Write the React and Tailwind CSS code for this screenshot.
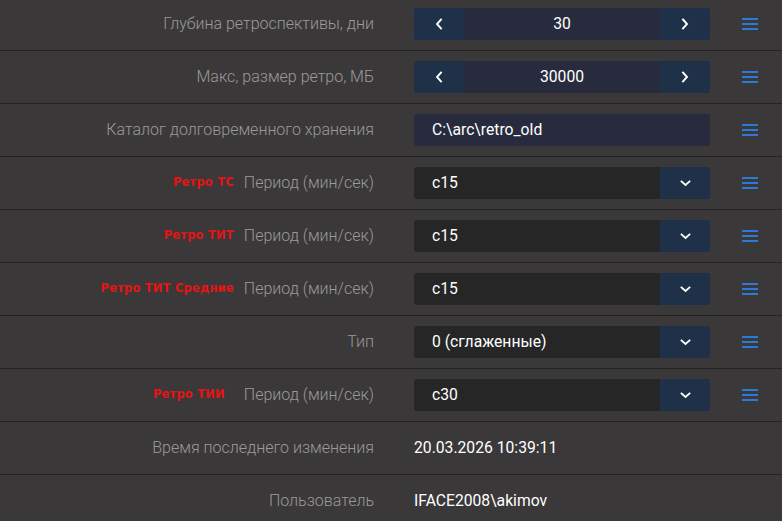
import React from "react";

const Chevron = ({ dir }) => {
  if (dir === "down")
    return (
      <svg viewBox="0 0 11 7" className="w-[11px] h-[7px]" fill="none" stroke="white" strokeWidth="1.8" strokeLinecap="square">
        <path d="M1.5 1.5 L5.5 5 L9.5 1.5" />
      </svg>
    );
  const d = dir === "left" ? "M6 1.5 L2 6 L6 10.5" : "M2 1.5 L6 6 L2 10.5";
  return (
    <svg viewBox="0 0 8 12" className="w-[8px] h-[12px]" fill="none" stroke="white" strokeWidth="1.9" strokeLinecap="square">
      <path d={d} />
    </svg>
  );
};

const Menu = () => (
  <div className="w-[16px] flex flex-col gap-[2.7px]">
    <div className="h-[2px] bg-[#2b7ad6]" />
    <div className="h-[2px] bg-[#2b7ad6]" />
    <div className="h-[2px] bg-[#2b7ad6]" />
  </div>
);

const Stepper = ({ value }) => (
  <div className="w-[296px] h-[32px] flex rounded-[3px] overflow-hidden">
    <div className="w-[50px] bg-[#1e3149] flex items-center justify-center"><Chevron dir="left" /></div>
    <div className="flex-1 bg-[#282b3e] flex items-center justify-center text-white text-[15.7px]">{value}</div>
    <div className="w-[50px] bg-[#1e3149] flex items-center justify-center"><Chevron dir="right" /></div>
  </div>
);

const Select = ({ value }) => (
  <div className="w-[296px] h-[32px] flex rounded-[3px] overflow-hidden">
    <div className="flex-1 bg-[#262626] flex items-center pl-[18px] text-white text-[15.7px]">{value}</div>
    <div className="w-[50px] bg-[#1e3149] flex items-center justify-center"><Chevron dir="down" /></div>
  </div>
);

const Input = ({ value }) => (
  <div className="w-[296px] h-[32px] rounded-[3px] bg-[#282b3e] flex items-center pl-[18px] text-white text-[15.7px]">{value}</div>
);

const Red = ({ children, mr = "mr-[10px]" }) => (
  <span className={`text-[#e51414] font-bold text-[11.5px] tracking-[0.2px] ${mr}`} style={{ fontFamily: '"DejaVu Sans", Verdana, sans-serif' }}>{children}</span>
);

const Row = ({ label, red, redMr, children, menu = true }) => (
  <div className="h-[53px] border-b border-[#242424] flex items-center">
    <div className="w-[374px] flex items-center justify-end text-[#9a9a9a] text-[16px] font-light">
      {red && <Red mr={redMr}>{red}</Red>}
      <span>{label}</span>
    </div>
    <div className="ml-[40px] w-[296px] flex items-center">{children}</div>
    {menu && <div className="ml-[32px]"><Menu /></div>}
  </div>
);

export default function App() {
  return (
    <div className="w-[782px] h-[521px] overflow-hidden bg-[#3a3839]" style={{ fontFamily: "Roboto, sans-serif" }}>
      <div className="-mt-[2px]">
        <Row label="Глубина ретроспективы, дни"><Stepper value="30" /></Row>
        <Row label="Макс, размер ретро, МБ"><Stepper value="30000" /></Row>
        <Row label="Каталог долговременного хранения"><Input value="C:\arc\retro_old" /></Row>
        <Row label="Период (мин/сек)" red="Ретро ТС"><Select value="c15" /></Row>
        <Row label="Период (мин/сек)" red="Ретро ТИТ"><Select value="c15" /></Row>
        <Row label="Период (мин/сек)" red="Ретро ТИТ Средние"><Select value="c15" /></Row>
        <Row label="Тип"><Select value="0 (сглаженные)" /></Row>
        <Row label="Период (мин/сек)" red="Ретро ТИИ" redMr="mr-[19px]"><Select value="c30" /></Row>
        <Row label="Время последнего изменения" menu={false}><span className="text-white text-[15.7px]">20.03.2026 10:39:11</span></Row>
        <Row label="Пользователь" menu={false}><span className="text-white text-[15.7px]">IFACE2008\akimov</span></Row>
      </div>
    </div>
  );
}
